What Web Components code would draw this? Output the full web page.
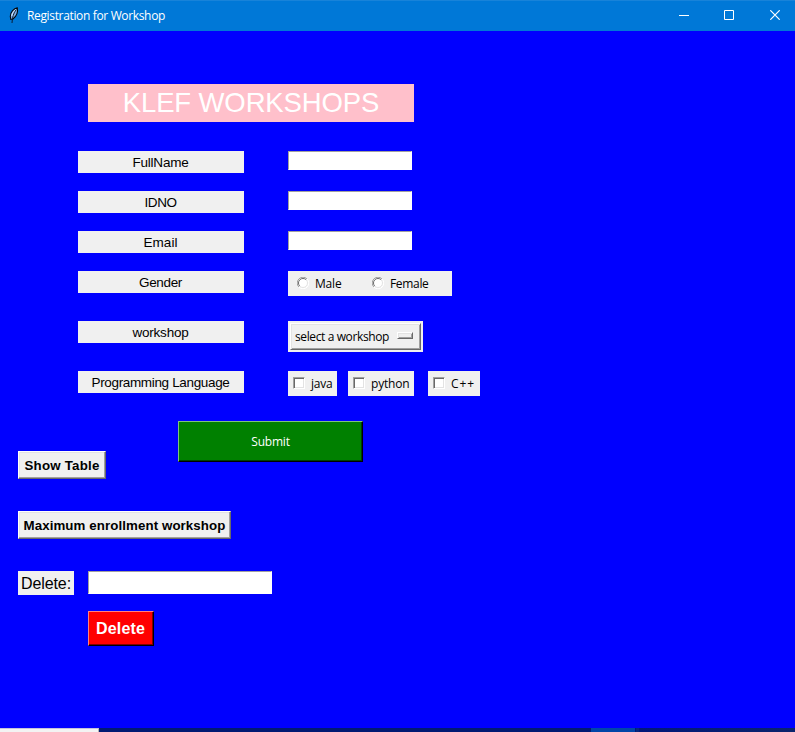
<!DOCTYPE html>
<html lang="en">
<head>
<meta charset="utf-8">
<title>Registration for Workshop</title>
<style>
html,body{margin:0;padding:0;width:795px;height:732px;overflow:hidden;background:#00f}
</style>
</head>
<body>
<registration-window></registration-window>
<script>
function define(name, markup, setup) {
  const tpl = document.createElement('template');
  tpl.innerHTML = markup;
  customElements.define(name, class extends HTMLElement {
    constructor() {
      super();
      this.attachShadow({mode: 'open'}).append(tpl.content.cloneNode(true));
    }
    connectedCallback() { if (setup) setup(this); }
  });
}

/* One line of text, tracked so that its advance equals the w attribute. */
define('tk-text', `<style>
:host{display:block;white-space:pre;flex:none}
span{display:inline-block}
</style><span><slot></slot></span>`, el => {
  const span = el.shadowRoot.querySelector('span');
  const want = parseFloat(el.getAttribute('w'));
  const n = el.textContent.length;
  if (want && n) span.style.letterSpacing = ((want - span.getBoundingClientRect().width) / n) + 'px';
});

define('title-bar', `<style>
:host{display:flex;align-items:center;height:31px;box-sizing:border-box;background:#0078d7;border-top:1px solid #1883d9;color:#fff;
 font:12px/30px "Open Sans","Noto Sans",sans-serif;padding-left:8px}
.feather{width:12px;height:17px;margin:0 7px 1px 0}
tk-text{flex:1}
.c{flex:none;width:46px;height:28px;margin-bottom:2px;display:flex;justify-content:center;align-items:center}
.min{width:44px}
.close{margin-right:-3px}
</style>
<svg class="feather" viewBox="0 0 12 17"><path d="M9.300 .8C6 1.500 2.300 5 2.300 9.500L2.800 12.300 4.900 12C8 9.500 10.200 5 9.300 .8Z" fill="#7fade4" stroke="#05070c" stroke-width="1.100"/><path d="M8.300 2.500C5.500 6 4.300 10 4 16" fill="none" stroke="#0a1220" stroke-width=".9"/><path d="M7.500 2.500C5.700 4 4.200 6.500 3.800 9" fill="none" stroke="#e4f1ff" stroke-width=".9"/></svg>
<tk-text w="138">Registration for Workshop</tk-text>
<div class="c min"><svg width="10" height="10"><path d="M0 5.500H10" stroke="#fff"/></svg></div>
<div class="c"><svg width="10" height="10"><path d="M.5 .5H9.500V9.500H.5Z" fill="none" stroke="#fff"/></svg></div>
<div class="c close"><svg width="10" height="10"><path d="M.3 .3L9.700 9.700M9.700 .3L.3 9.700" stroke="#fff" stroke-width="1.200"/></svg></div>`);

define('tk-label', `<style>
:host{display:flex;flex:none;justify-content:center;align-items:center;box-sizing:border-box;width:166px;height:22px;padding:1px 1px 0 0;background:#f0f0f0;color:#000;
 font:13.500px/22px "Liberation Sans",Arial,sans-serif}
</style><slot></slot>`);

define('tk-entry', `<style>
:host{display:block;flex:none;box-sizing:border-box;width:124px;height:19px;background:#fff;border:1px solid #fff;border-top-color:#a0a0a0;border-left-color:#a0a0a0}
</style>`);

define('tk-button', `<style>
:host{display:flex;flex:none;justify-content:center;align-items:center;box-sizing:border-box;background:var(--bg,#f0f0f0);
 border:1px solid;border-color:var(--hi,#fff) var(--lo,#696969) var(--lo,#696969) var(--hi,#fff);
 box-shadow:inset -1px -1px var(--lo2,#a0a0a0),inset 1px 1px var(--hi2,#e3e3e3)}
</style><slot></slot>`);

define('tk-radio', `<style>
:host{display:flex;align-items:center;height:25px;font:12px/25px "Open Sans","Noto Sans",sans-serif;color:#000}
svg{width:12px;height:12px;margin:0 6px 1px 0}
</style>
<svg viewBox="0 0 12 12"><circle cx="6" cy="6" r="5" fill="#fff"/><path d="M1.900 10.100A5.500 5.500 0 0 1 10.100 1.900" fill="none" stroke="#a0a0a0"/><path d="M2.800 9.200A4.500 4.500 0 0 1 9.200 2.800" fill="none" stroke="#696969"/><path d="M10.100 1.900A5.500 5.500 0 0 1 1.900 10.100" fill="none" stroke="#fff"/><path d="M9.200 2.800A4.500 4.500 0 0 1 2.800 9.200" fill="none" stroke="#e3e3e3"/></svg><slot></slot>`);

define('tk-check', `<style>
:host{display:flex;flex:none;align-items:center;box-sizing:border-box;height:25px;padding-left:5px;background:#f0f0f0;font:12px/25px "Open Sans","Noto Sans",sans-serif;color:#000}
i{box-sizing:border-box;width:12px;height:12px;margin:0 6px 1px 0;background:#fff;border:1px solid;border-color:#a0a0a0 #fff #fff #a0a0a0;box-shadow:inset 1px 1px #696969,inset -1px -1px #e3e3e3}
</style><i></i><slot></slot>`);

define('tk-option', `<style>
:host{display:block;flex:none;box-sizing:border-box;width:135px;height:31px;padding:2px;background:#f0f0f0}
.b{box-sizing:border-box;height:27px;display:flex;align-items:center;justify-content:space-between;padding:1px 7px 0 4px;border:1px solid;border-color:#fff #696969 #696969 #fff;
 box-shadow:inset 1px 1px #e3e3e3,inset -1px -1px #a0a0a0;font:12px/24px "Open Sans","Noto Sans",sans-serif;color:#000}
i{box-sizing:border-box;width:16px;height:7px;margin-bottom:3px;border:1px solid;border-color:#fff #696969 #696969 #fff;box-shadow:inset 1px 1px #e3e3e3,inset -1px -1px #a0a0a0}
</style><div class="b"><slot></slot><i></i></div>`);

define('form-row', `<style>
:host{display:flex;align-items:flex-start;gap:44px;height:40px;box-sizing:border-box;padding-left:78px}
</style><slot></slot>`);

define('task-strip', `<style>
:host{display:flex;height:4px;background:#001a73}
.w{width:99px;box-sizing:border-box;background:#f3f3f3;border-top:1px solid #c3c3dc;border-right:1px solid #b4b4b4;margin-right:492px}
.a{width:44px;background:#0046a8}.b{width:3px;background:#06287d;margin-left:1px}
.c{flex:1;background:linear-gradient(90deg,#00187a,#0a246c)}
</style><div class="w"></div><div class="a"></div><div class="b"></div><div class="c"></div>`);

define('registration-window', `<style>
:host{display:flex;flex-direction:column;width:795px;height:732px;background:#00f}
main{flex:1;display:flex;flex-direction:column;align-items:flex-start;padding-top:53px}
.title{width:326px;height:38px;margin:0 0 29px 88px;padding:0;background:#ffc0cb;color:#fff;font-size:27.500px;line-height:38px}
.tall{height:50px}
.gender{display:flex;box-sizing:border-box;width:164px;padding-left:9px;background:#f0f0f0}
.gender tk-radio:first-child{width:75px}
.checks{display:flex}
.actions{display:flex;height:90px;padding-left:18px}
.show{width:88px;height:28px;margin:30px 72px 0 0}
.bold{padding-top:1px;font:bold 13.300px/24px "Liberation Sans",Arial,sans-serif;color:#000}
.submit{--bg:#008000;--hi:#80c080;--hi2:#008000;--lo:#000;--lo2:#004000;width:185px;height:41px;color:#fff;font:12px/37px "Open Sans","Noto Sans",sans-serif}
.max{width:213px;height:28px;margin:0 0 32px 18px}
.del{display:flex;gap:14px;padding-left:18px;height:40px}
.del tk-label{width:56px;height:24px;padding:1px 0 0;font-size:16px;line-height:24px}
.del tk-entry{width:184px;height:23px}
.remove{--bg:#f00;--hi:#ff8080;--hi2:#f00;--lo:#000;--lo2:#800000;width:66px;height:35px;margin-left:88px;padding-right:1px;color:#fff;font:bold 16px/31px "Liberation Sans",Arial,sans-serif}
</style>
<title-bar></title-bar>
<main>
 <tk-label class="title"><tk-text w="256.500">KLEF WORKSHOPS</tk-text></tk-label>
 <form-row><tk-label><tk-text w="56">FullName</tk-text></tk-label><tk-entry></tk-entry></form-row>
 <form-row><tk-label><tk-text w="32">IDNO</tk-text></tk-label><tk-entry></tk-entry></form-row>
 <form-row><tk-label><tk-text w="34">Email</tk-text></tk-label><tk-entry></tk-entry></form-row>
 <form-row class="tall"><tk-label><tk-text w="43">Gender</tk-text></tk-label><div class="gender"><tk-radio><tk-text w="26.500">Male</tk-text></tk-radio><tk-radio><tk-text w="38.500">Female</tk-text></tk-radio></div></form-row>
 <form-row class="tall"><tk-label><tk-text w="56">workshop</tk-text></tk-label><tk-option><tk-text w="94">select a workshop</tk-text></tk-option></form-row>
 <form-row class="tall"><tk-label><tk-text w="138">Programming Language</tk-text></tk-label><div class="checks"><tk-check style="width:49px;margin-right:11px"><tk-text w="21.500">java</tk-text></tk-check><tk-check style="width:66px;margin-right:14px"><tk-text w="38.500">python</tk-text></tk-check><tk-check style="width:52px"><tk-text w="24">C++</tk-text></tk-check></div></form-row>
 <div class="actions"><tk-button class="show bold"><tk-text w="75">Show Table</tk-text></tk-button><tk-button class="submit"><tk-text w="38.500">Submit</tk-text></tk-button></div>
 <tk-button class="max bold"><tk-text w="202">Maximum enrollment workshop</tk-text></tk-button>
 <div class="del"><tk-label><tk-text w="50">Delete:</tk-text></tk-label><tk-entry></tk-entry></div>
 <tk-button class="remove"><tk-text w="49">Delete</tk-text></tk-button>
</main>
<task-strip></task-strip>`);
</script>
</body>
</html>
